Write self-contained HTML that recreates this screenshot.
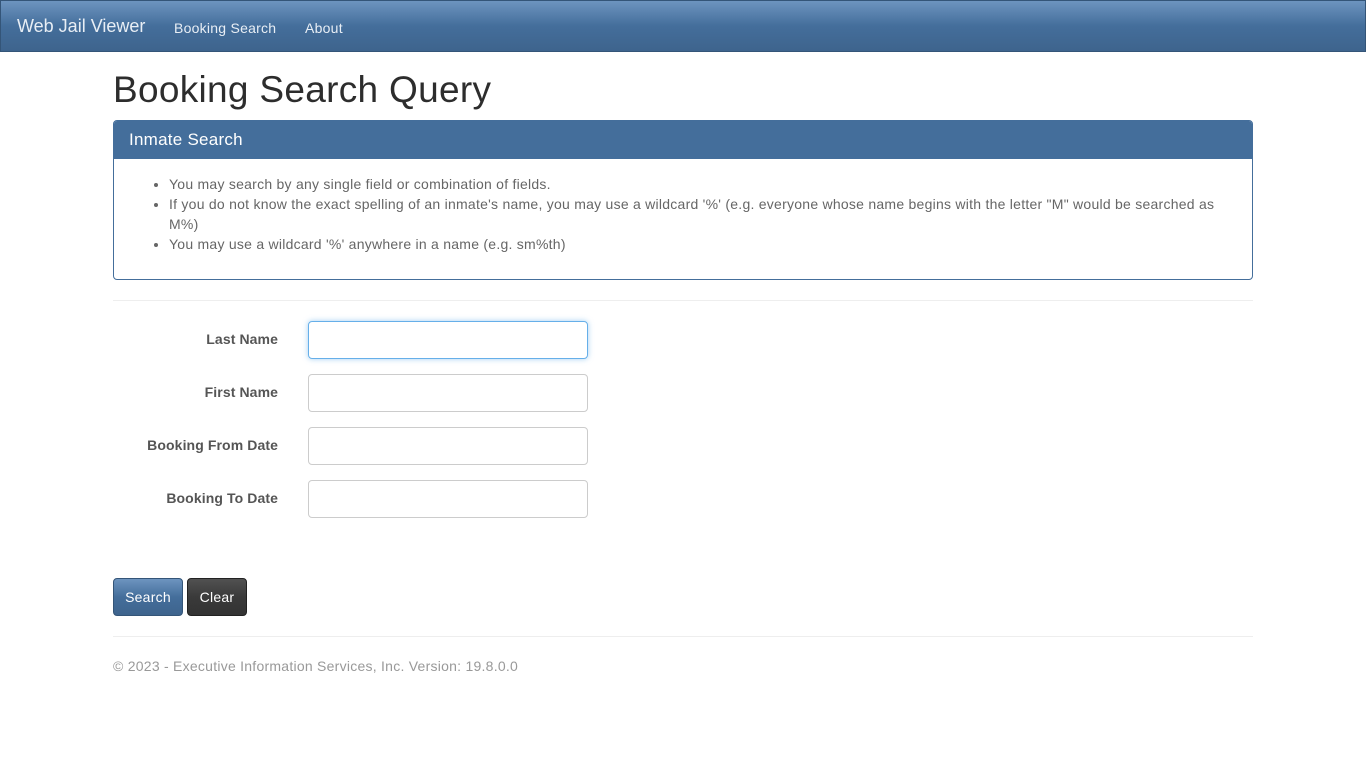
<!DOCTYPE html>
<html><head><meta charset="utf-8"><style>
*{box-sizing:border-box}
body{margin:0;font-family:"Liberation Sans",sans-serif;font-size:14px;color:#666;background:#fff;width:1366px;height:768px;overflow:hidden;letter-spacing:0.25px}
.nav{position:absolute;left:0;top:0;width:1366px;height:52px;background:linear-gradient(#6d94bf,#446e9b 50%,#3e648d);border:1px solid #345578;}
.nav .brand{position:absolute;left:16px;top:15px;font-size:18px;color:#e8eef5;letter-spacing:0}
.nav a{position:absolute;top:19px;font-size:14px;color:#e8eef5}
h1{position:absolute;left:113px;top:69px;margin:0;font-size:37px;font-weight:normal;color:#2d2d2d;letter-spacing:0.3px}
.panel{position:absolute;left:113px;top:120px;width:1140px;height:160px;border:1px solid #446e9b;border-radius:4px;overflow:hidden}
.ph{background:#446e9b;color:#fff;font-size:17px;height:38px;padding:9px 15px}
.panel ul{margin:15px 0 0;padding-left:55px;padding-right:20px;line-height:20px;color:#666;font-size:14px}
hr{position:absolute;left:113px;width:1140px;border:0;border-top:1px solid #eee;margin:0}
label{position:absolute;width:165px;left:113px;text-align:right;font-weight:bold;color:#555;font-size:14px;letter-spacing:0.1px}
.in{position:absolute;left:308px;width:280px;height:38px;border:1px solid #ccc;border-radius:4px}
.btn{position:absolute;top:578px;height:38px;border-radius:4px;color:#fff;font-size:14px;text-align:center;padding-top:10px}
.foot{position:absolute;left:113px;top:658px;color:#999;font-size:14px}
</style></head><body>
<div class="nav"><span class="brand">Web Jail Viewer</span><a style="left:173px">Booking Search</a><a style="left:304px">About</a></div>
<h1>Booking Search Query</h1>
<div class="panel"><div class="ph">Inmate Search</div>
<ul><li>You may search by any single field or combination of fields.</li>
<li>If you do not know the exact spelling of an inmate's name, you may use a wildcard '%' (e.g. everyone whose name begins with the letter "M" would be searched as M%)</li>
<li>You may use a wildcard '%' anywhere in a name (e.g. sm%th)</li></ul></div>
<hr style="top:300px">
<label style="top:331px">Last Name</label><div class="in" style="top:321px;border-color:#66afe9;box-shadow:0 0 6px rgba(102,175,233,.6)"></div>
<label style="top:384px">First Name</label><div class="in" style="top:374px"></div>
<label style="top:437px">Booking From Date</label><div class="in" style="top:427px"></div>
<label style="top:490px">Booking To Date</label><div class="in" style="top:480px"></div>
<div class="btn" style="left:113px;width:70px;background:linear-gradient(#6d94bf,#446e9b 50%,#3e648d);border:1px solid #345578">Search</div>
<div class="btn" style="left:187px;width:60px;background:linear-gradient(#515151,#3a3a3a 50%,#333);border:1px solid #222">Clear</div>
<hr style="top:636px">
<div class="foot">© 2023 - Executive Information Services, Inc. Version: 19.8.0.0</div>
</body></html>
